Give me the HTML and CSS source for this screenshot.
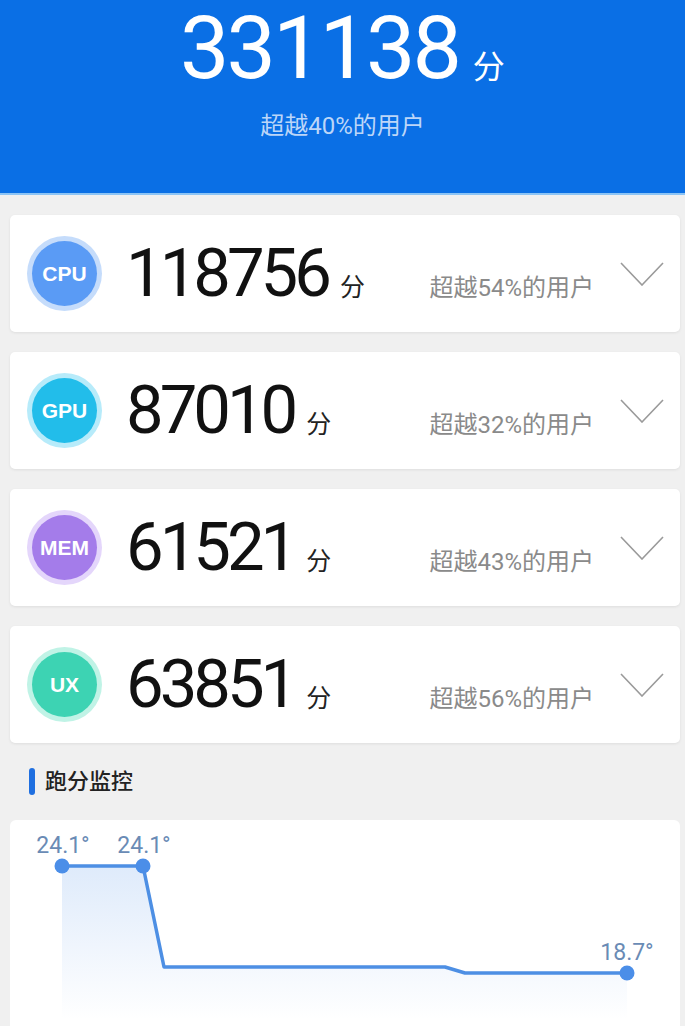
FILE: index.html
```html
<!DOCTYPE html>
<html lang="zh-CN">
<head>
  <meta charset="UTF-8">
  <meta name="viewport" content="width=device-width, initial-scale=1.0">
  <title>跑分结果</title>
  <link rel="stylesheet" href="styles.css">
</head>
<body>
  <header class="summary">
    <div class="total">
      <span class="total-num">331138</span>
      <span class="total-unit">分</span>
    </div>
    <p class="beat">超越40%的用户</p>
  </header>

  <main>
    <section class="cards">
      <div class="card">
        <span class="badge badge-cpu">CPU</span>
        <div class="score-row">
          <span class="score">118756</span>
          <span class="unit">分</span>
          <span class="pct">超越54%的用户</span>
        </div>
        <svg class="chev" viewBox="0 0 44 24"><polyline points="1,1 22,23 43,1"/></svg>
      </div>
      <div class="card">
        <span class="badge badge-gpu">GPU</span>
        <div class="score-row">
          <span class="score">87010</span>
          <span class="unit">分</span>
          <span class="pct">超越32%的用户</span>
        </div>
        <svg class="chev" viewBox="0 0 44 24"><polyline points="1,1 22,23 43,1"/></svg>
      </div>
      <div class="card">
        <span class="badge badge-mem">MEM</span>
        <div class="score-row">
          <span class="score">61521</span>
          <span class="unit">分</span>
          <span class="pct">超越43%的用户</span>
        </div>
        <svg class="chev" viewBox="0 0 44 24"><polyline points="1,1 22,23 43,1"/></svg>
      </div>
      <div class="card">
        <span class="badge badge-ux">UX</span>
        <div class="score-row">
          <span class="score">63851</span>
          <span class="unit">分</span>
          <span class="pct">超越56%的用户</span>
        </div>
        <svg class="chev" viewBox="0 0 44 24"><polyline points="1,1 22,23 43,1"/></svg>
      </div>
    </section>

    <h2 class="section-title"><span class="bar"></span>跑分监控</h2>

    <section class="chart">
      <svg width="670" height="260" viewBox="0 0 670 260">
        <defs>
          <linearGradient id="fade" x1="0" y1="46" x2="0" y2="200" gradientUnits="userSpaceOnUse">
            <stop offset="0" stop-color="#4b8ee8" stop-opacity="0.18"/>
            <stop offset="1" stop-color="#4b8ee8" stop-opacity="0"/>
          </linearGradient>
        </defs>
        <polygon class="area" points="52,46 133,46 154,147 435,147 455,153 617,153 617,260 52,260"/>
        <polyline class="line" points="52,46 133,46 154,147 435,147 455,153 617,153"/>
        <circle class="dot" cx="52" cy="46" r="7.5"/>
        <circle class="dot" cx="133" cy="46" r="7.5"/>
        <circle class="dot" cx="617" cy="153" r="7.5"/>
        <text class="temp" x="53" y="33">24.1°</text>
        <text class="temp" x="134" y="33">24.1°</text>
        <text class="temp" x="617" y="140">18.7°</text>
      </svg>
    </section>
  </main>
</body>
</html>
```

FILE: styles.css
```css
body {
  margin: 0;
  background-color: #f0f0f0;
  font-family: Roboto, "Noto Sans CJK SC", sans-serif;
}

.summary {
  background-color: #0a6fe5;
  border-bottom: 2px solid #8cc4f5;
  padding: 2px 0 53px;
  text-align: center;
  color: white;
}
.total {
  display: flex;
  justify-content: center;
  align-items: baseline;
}
.total-num {
  font-size: 88px;
  line-height: 1.05;
  letter-spacing: -3px;
}
.total-unit {
  font-size: 32px;
  margin-left: 14px;
}
.beat {
  margin: 18px 0 0;
  font-size: 24px;
  line-height: 28px;
  color: #bcd6f8;
}

.cards {
  display: flex;
  flex-direction: column;
  gap: 20px;
  padding: 20px 5px 0 10px;
}
.card {
  height: 117px;
  display: flex;
  align-items: center;
  padding: 0 16px 0 22px;
  background-color: white;
  border-radius: 5px;
  box-shadow: 0 1px 3px rgba(0, 0, 0, 0.08);
}
.badge {
  flex-shrink: 0;
  width: 65px;
  height: 65px;
  margin-right: 29px;
  border-radius: 50%;
  display: flex;
  justify-content: center;
  align-items: center;
  color: white;
  font: 700 21px "Liberation Sans", Arial, sans-serif;
}
.badge-cpu {
  background-color: #5a9bf5;
  box-shadow: 0 0 0 5px #c5dcfb;
}
.badge-gpu {
  background-color: #22bdea;
  box-shadow: 0 0 0 5px #b7ebfa;
}
.badge-mem {
  background-color: #a47cea;
  box-shadow: 0 0 0 5px #e4d6fb;
}
.badge-ux {
  background-color: #3dd3b3;
  box-shadow: 0 0 0 5px #c0f3e6;
}
.score-row {
  flex: 1;
  display: flex;
  align-items: baseline;
}
.score {
  font-size: 67px;
  line-height: 1;
  letter-spacing: -4px;
  color: #111;
}
.unit {
  margin-left: 12px;
  font-size: 25px;
  color: #222;
}
.pct {
  margin-left: auto;
  font-size: 24px;
  color: #8a8a8a;
}
.chev {
  width: 44px;
  height: 24px;
  margin-left: 26px;
  fill: none;
  stroke: #9a9a9a;
  stroke-width: 1.6;
}

.section-title {
  display: flex;
  align-items: center;
  gap: 10px;
  margin: 25px 10px;
  padding-left: 19px;
  font-size: 22px;
  line-height: 27px;
  font-weight: 500;
  color: #222;
}
.bar {
  width: 6px;
  height: 27px;
  border-radius: 3px;
  background-color: #1f6fe0;
}

.chart {
  margin: 0 5px 0 10px;
  height: 260px;
  background-color: white;
  border-radius: 6px;
}
.chart svg {
  display: block;
}
.area {
  fill: url(#fade);
}
.line {
  fill: none;
  stroke: #4d8fe4;
  stroke-width: 3.5;
  stroke-linejoin: round;
}
.dot {
  fill: #4b8ee8;
}
.temp {
  font-family: Roboto, sans-serif;
  font-size: 23px;
  fill: #6a8bb5;
  text-anchor: middle;
}
```
